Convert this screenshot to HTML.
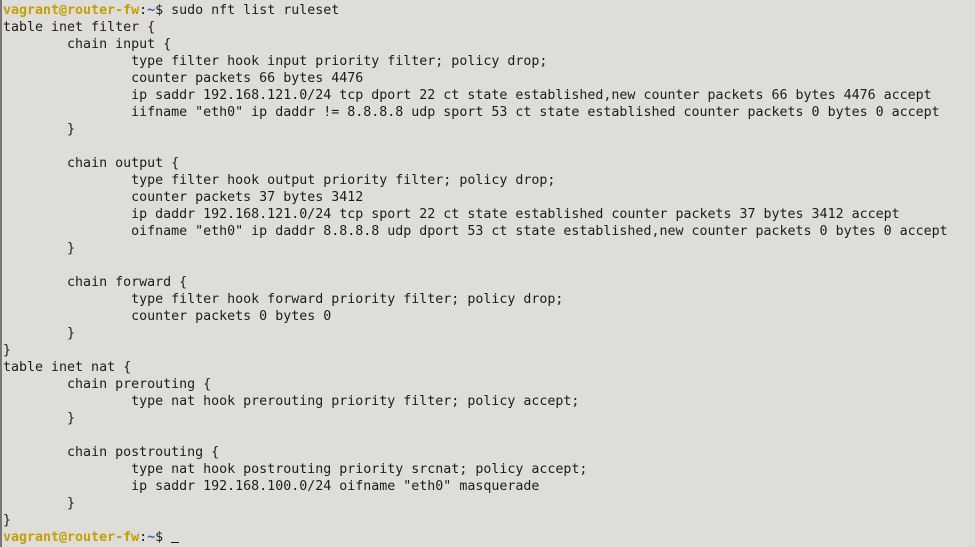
<!DOCTYPE html><html><head><style>
body{margin:0;width:975px;height:547px;background:#deddd9;overflow:hidden;}
pre{margin:0;position:absolute;left:3px;top:2px;font-family:"DejaVu Sans Mono","Liberation Mono",monospace;font-size:13.3px;line-height:17px;color:#1c1c1c;tab-size:8;}
.b{position:absolute;left:0;top:0;width:2px;height:547px;background:#777;}
.u{color:#c4a000;font-weight:bold}.t{color:#3465a4;font-weight:bold}
.c{display:inline-block;width:8px;border-bottom:1px solid #1c1c1c;height:12px;vertical-align:-2px}
</style></head><body><div class="b"></div><pre><span class="u">vagrant@router-fw</span>:<span class="t">~</span>$ sudo nft list ruleset
table inet filter {
	chain input {
		type filter hook input priority filter; policy drop;
		counter packets 66 bytes 4476
		ip saddr 192.168.121.0/24 tcp dport 22 ct state established,new counter packets 66 bytes 4476 accept
		iifname "eth0" ip daddr != 8.8.8.8 udp sport 53 ct state established counter packets 0 bytes 0 accept
	}

	chain output {
		type filter hook output priority filter; policy drop;
		counter packets 37 bytes 3412
		ip daddr 192.168.121.0/24 tcp sport 22 ct state established counter packets 37 bytes 3412 accept
		oifname "eth0" ip daddr 8.8.8.8 udp dport 53 ct state established,new counter packets 0 bytes 0 accept
	}

	chain forward {
		type filter hook forward priority filter; policy drop;
		counter packets 0 bytes 0
	}
}
table inet nat {
	chain prerouting {
		type nat hook prerouting priority filter; policy accept;
	}

	chain postrouting {
		type nat hook postrouting priority srcnat; policy accept;
		ip saddr 192.168.100.0/24 oifname "eth0" masquerade
	}
}
<span class="u">vagrant@router-fw</span>:<span class="t">~</span>$ <span class="c"></span></pre></body></html>
